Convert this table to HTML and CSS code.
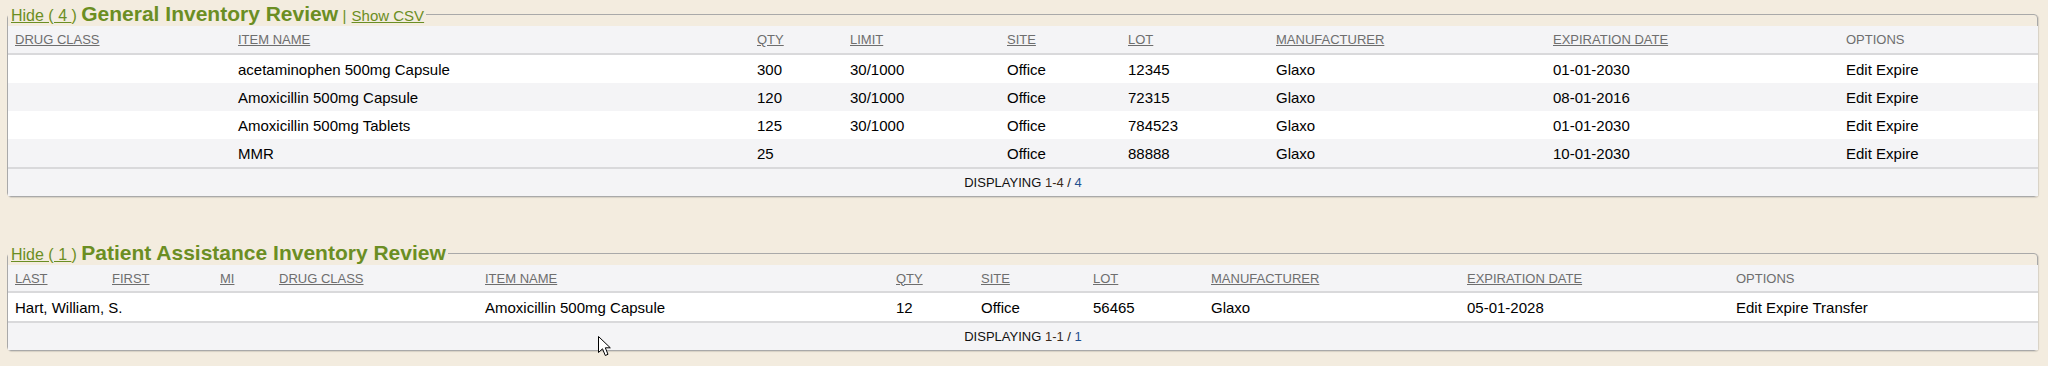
FILE: index.html
```html
<!DOCTYPE html>
<html lang="en">
<head>
<meta charset="utf-8">
<title>Inventory Review</title>
<link rel="stylesheet" href="styles.css">
</head>
<body>
<div class="page">
  <fieldset class="panel">
    <legend class="panel-legend"><a class="toggle" href="#">Hide ( 4 </a><span class="small">) </span><span class="panel-title">General Inventory Review</span><span class="small"> </span><span class="sep">| </span><a class="csv" href="#">Show CSV</a></legend>
    <table class="grid grid-general">
      <colgroup>
        <col><col><col><col><col><col><col><col><col>
      </colgroup>
      <thead>
        <tr>
          <th><a href="#">DRUG CLASS</a></th>
          <th><a href="#">ITEM NAME</a></th>
          <th><a href="#">QTY</a></th>
          <th><a href="#">LIMIT</a></th>
          <th><a href="#">SITE</a></th>
          <th><a href="#">LOT</a></th>
          <th><a href="#">MANUFACTURER</a></th>
          <th><a href="#">EXPIRATION DATE</a></th>
          <th>OPTIONS</th>
        </tr>
      </thead>
      <tbody>
        <tr>
          <td></td><td>acetaminophen 500mg Capsule</td><td>300</td><td>30/1000</td><td>Office</td><td>12345</td><td>Glaxo</td><td>01-01-2030</td>
          <td><a class="opt" href="#">Edit</a> <a class="opt" href="#">Expire</a></td>
        </tr>
        <tr>
          <td></td><td>Amoxicillin 500mg Capsule</td><td>120</td><td>30/1000</td><td>Office</td><td>72315</td><td>Glaxo</td><td>08-01-2016</td>
          <td><a class="opt" href="#">Edit</a> <a class="opt" href="#">Expire</a></td>
        </tr>
        <tr>
          <td></td><td>Amoxicillin 500mg Tablets</td><td>125</td><td>30/1000</td><td>Office</td><td>784523</td><td>Glaxo</td><td>01-01-2030</td>
          <td><a class="opt" href="#">Edit</a> <a class="opt" href="#">Expire</a></td>
        </tr>
        <tr>
          <td></td><td>MMR</td><td>25</td><td></td><td>Office</td><td>88888</td><td>Glaxo</td><td>10-01-2030</td>
          <td><a class="opt" href="#">Edit</a> <a class="opt" href="#">Expire</a></td>
        </tr>
      </tbody>
      <tfoot>
        <tr><td colspan="9">DISPLAYING <span class="range">1-4</span> / <span class="total">4</span></td></tr>
      </tfoot>
    </table>
  </fieldset>

  <fieldset class="panel">
    <legend class="panel-legend"><a class="toggle" href="#">Hide ( 1 </a><span class="small">) </span><span class="panel-title">Patient Assistance Inventory Review</span></legend>
    <table class="grid grid-patient">
      <colgroup>
        <col><col><col><col><col><col><col><col><col><col><col>
      </colgroup>
      <thead>
        <tr>
          <th><a href="#">LAST</a></th>
          <th><a href="#">FIRST</a></th>
          <th><a href="#">MI</a></th>
          <th><a href="#">DRUG CLASS</a></th>
          <th><a href="#">ITEM NAME</a></th>
          <th><a href="#">QTY</a></th>
          <th><a href="#">SITE</a></th>
          <th><a href="#">LOT</a></th>
          <th><a href="#">MANUFACTURER</a></th>
          <th><a href="#">EXPIRATION DATE</a></th>
          <th>OPTIONS</th>
        </tr>
      </thead>
      <tbody>
        <tr>
          <td>Hart, William, S.</td><td></td><td></td><td></td><td>Amoxicillin 500mg Capsule</td><td>12</td><td>Office</td><td>56465</td><td>Glaxo</td><td>05-01-2028</td>
          <td><a class="opt" href="#">Edit</a> <a class="opt" href="#">Expire</a> <a class="opt" href="#">Transfer</a></td>
        </tr>
      </tbody>
      <tfoot>
        <tr><td colspan="11">DISPLAYING <span class="range">1-1</span> / <span class="total">1</span></td></tr>
      </tfoot>
    </table>
  </fieldset>
</div>

<svg class="cursor" width="14" height="22" viewBox="0 0 14 22" aria-hidden="true">
  <polygon points="0.5,0.5 0.5,16.5 4.5,12.8 7.3,19.5 10,18.3 7.3,11.8 12.3,11.8" fill="#ffffff" stroke="#000000" stroke-width="1" stroke-linejoin="miter"/>
</svg>
</body>
</html>
```

FILE: styles.css
```css
html, body {
  margin: 0;
  padding: 0;
}

body {
  background: #f3ecdf;
  font-family: "Liberation Sans", Arial, sans-serif;
  color: #000;
  position: relative;
  width: 2048px;
  height: 366px;
  overflow: hidden;
}

.page {
  padding: 2px 10px 0 7px;
  display: flex;
  flex-direction: column;
  gap: 44px;
}

.panel {
  margin: 0;
  padding: 0;
  border: 1px solid #a9a9a9;
  border-radius: 4px;
  box-shadow: 1px 1px 1px rgba(0, 0, 0, 0.12);
  min-width: 0;
}

.panel-legend {
  padding: 0 2px 0 3px;
  margin-left: 0;
  height: 24px;
  font-size: 21px;
  line-height: 24px;
  color: #6b8e23;
  white-space: nowrap;
}

.panel-legend a {
  color: #6b8e23;
  text-decoration: underline;
}

.toggle,
.small {
  font-size: 16px;
  line-height: 1;
}

.panel-title {
  font-size: 21px;
  font-weight: bold;
}

.sep,
.csv {
  font-size: 15px;
  line-height: 1;
}

.sep {
  padding-right: 1px;
}

.grid {
  width: 2030px;
  table-layout: fixed;
  border-collapse: separate;
  border-spacing: 0;
}

.grid th,
.grid td {
  padding: 0 7px;
  text-align: left;
  white-space: nowrap;
  overflow: visible;
}

.grid thead th {
  background: #f4f4f6;
  height: 27px;
  font-size: 13px;
  font-weight: normal;
  color: #6e6e6e;
  border-bottom: 2px solid #d9d9db;
  vertical-align: middle;
}

.grid-patient thead th {
  height: 26px;
}

.grid thead th a {
  color: #6e6e6e;
  text-decoration: underline;
}

.grid tbody td {
  height: 28px;
  font-size: 15px;
  background: #ffffff;
  vertical-align: middle;
}

.grid tbody tr:nth-child(even) td {
  background: #f4f4f6;
}

.grid .opt {
  color: #000;
  text-decoration: none;
}

.grid tfoot td {
  background: #f4f4f6;
  height: 27px;
  font-size: 13px;
  text-align: center;
  border-top: 2px solid #d9d9db;
  color: #111;
}

.grid tfoot .range {
  color: #3b2a1c;
}

.grid tfoot .total {
  color: #1f4f8f;
}

/* General inventory column widths */
.grid-general col:nth-child(1) { width: 223px; }
.grid-general col:nth-child(2) { width: 519px; }
.grid-general col:nth-child(3) { width: 93px; }
.grid-general col:nth-child(4) { width: 157px; }
.grid-general col:nth-child(5) { width: 121px; }
.grid-general col:nth-child(6) { width: 148px; }
.grid-general col:nth-child(7) { width: 277px; }
.grid-general col:nth-child(8) { width: 293px; }
.grid-general col:nth-child(9) { width: 199px; }

/* Patient assistance column widths */
.grid-patient col:nth-child(1) { width: 97px; }
.grid-patient col:nth-child(2) { width: 108px; }
.grid-patient col:nth-child(3) { width: 59px; }
.grid-patient col:nth-child(4) { width: 206px; }
.grid-patient col:nth-child(5) { width: 411px; }
.grid-patient col:nth-child(6) { width: 85px; }
.grid-patient col:nth-child(7) { width: 112px; }
.grid-patient col:nth-child(8) { width: 118px; }
.grid-patient col:nth-child(9) { width: 256px; }
.grid-patient col:nth-child(10) { width: 269px; }
.grid-patient col:nth-child(11) { width: 309px; }

.cursor {
  position: absolute;
  left: 598px;
  top: 336px;
  pointer-events: none;
}
```
